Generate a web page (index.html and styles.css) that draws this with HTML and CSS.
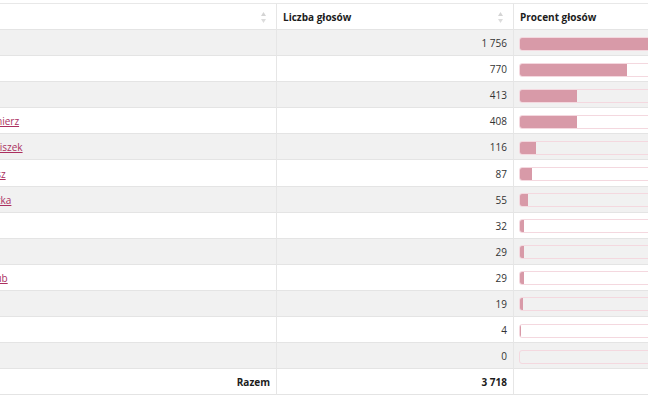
FILE: index.html
```html
<!DOCTYPE html>
<html lang="pl">
<head>
<meta charset="utf-8">
<title>Wyniki głosowania</title>
<link rel="stylesheet" href="styles.css">
</head>
<body>
<div class="viewport">
  <table class="results">
    <colgroup>
      <col class="c-name">
      <col class="c-votes">
      <col class="c-pct">
    </colgroup>
    <thead>
      <tr>
        <th><div class="th-in"><span>Imię</span><svg class="sort" width="5" height="11" viewBox="0 0 5 11"><path d="M2.5 0 L5 4 L0 4 Z" fill="#d4d4d4"/><path d="M0 7 L5 7 L2.5 11 Z" fill="#dcdcdc"/></svg></div></th>
        <th><div class="th-in"><span>Liczba głosów</span><svg class="sort" width="5" height="11" viewBox="0 0 5 11"><path d="M2.5 0 L5 4 L0 4 Z" fill="#d4d4d4"/><path d="M0 7 L5 7 L2.5 11 Z" fill="#dcdcdc"/></svg></div></th>
        <th><div class="th-in"><span>Procent głosów</span></div></th>
      </tr>
    </thead>
    <tbody>
      <tr><td><a href="#">Karol</a></td><td class="num">1 756</td><td><div class="bar"><div class="fill" style="width:100%"></div></div></td></tr>
      <tr><td><a href="#">Piotr</a></td><td class="num">770</td><td><div class="bar"><div class="fill" style="width:43.85%"></div></div></td></tr>
      <tr><td><a href="#">Jerzy</a></td><td class="num">413</td><td><div class="bar"><div class="fill" style="width:23.52%"></div></div></td></tr>
      <tr><td><a href="#">Kazimierz</a></td><td class="num">408</td><td><div class="bar"><div class="fill" style="width:23.23%"></div></div></td></tr>
      <tr><td><a href="#">Franciszek</a></td><td class="num">116</td><td><div class="bar"><div class="fill" style="width:6.61%"></div></div></td></tr>
      <tr><td><a href="#">Łukasz</a></td><td class="num">87</td><td><div class="bar"><div class="fill" style="width:4.95%"></div></div></td></tr>
      <tr><td><a href="#">Mieszka</a></td><td class="num">55</td><td><div class="bar"><div class="fill" style="width:3.13%"></div></div></td></tr>
      <tr><td><a href="#">Józef</a></td><td class="num">32</td><td><div class="bar"><div class="fill" style="width:1.82%"></div></div></td></tr>
      <tr><td><a href="#">Leon</a></td><td class="num">29</td><td><div class="bar"><div class="fill" style="width:1.65%"></div></div></td></tr>
      <tr><td><a href="#">J. Jakub</a></td><td class="num">29</td><td><div class="bar"><div class="fill" style="width:1.65%"></div></div></td></tr>
      <tr><td><a href="#">Igor</a></td><td class="num">19</td><td><div class="bar"><div class="fill" style="width:1.08%"></div></div></td></tr>
      <tr><td><a href="#">Jan</a></td><td class="num">4</td><td><div class="bar"><div class="fill" style="width:0.23%"></div></div></td></tr>
      <tr><td><a href="#">Wit</a></td><td class="num">0</td><td><div class="bar"><div class="fill" style="width:0%"></div></div></td></tr>
    </tbody>
    <tfoot>
      <tr><td class="num strong">Razem</td><td class="num strong">3 718</td><td></td></tr>
    </tfoot>
  </table>
</div>
</body>
</html>
```
FILE: styles.css
```css
* { box-sizing: border-box; }

html, body {
  margin: 0;
  padding: 0;
  background: #ffffff;
}

body {
  font-family: "Open Sans", "Liberation Sans", sans-serif;
  font-size: 10px;
  color: #333333;
}

.viewport {
  width: 648px;
  height: 400px;
  overflow: hidden;
  padding-top: 3px;
}

.results {
  border-collapse: separate;
  border-spacing: 0;
  table-layout: fixed;
  width: 803px;
  margin-left: -32px;
}

.c-name { width: 309px; }
.c-votes { width: 237px; }
.c-pct { width: 257px; }

.results th,
.results td {
  border-right: 1px solid #e6e6e6;
  border-bottom: 1px solid #e4e4e4;
  padding: 2px 6px 0;
  vertical-align: middle;
  line-height: 13px;
}

.results th:last-child,
.results td:last-child {
  border-right: none;
}

.results th {
  border-top: 1px solid #e8e8e8;
  height: 27px;
  text-align: left;
  font-weight: 700;
  color: #1c1c1c;
  background: #ffffff;
}

.th-in {
  display: flex;
  align-items: center;
  justify-content: space-between;
  padding-right: 4px;
}

.sort {
  display: block;
  flex: none;
}

.results td {
  height: 26.1px;
}

.results tbody tr:nth-child(odd) td {
  background: #f1f1f1;
}

.results tbody tr:nth-child(even) td {
  background: #ffffff;
}

.results tfoot td {
  background: #ffffff;
}

.num {
  text-align: right;
  color: #333333;
}

.strong {
  font-weight: 700;
  color: #1c1c1c;
}

.results a {
  color: #ab2f5f;
  text-decoration: underline;
}

.results td:last-child {
  padding-left: 5px;
}

.bar {
  height: 14px;
  border: 1px solid #f4d8df;
  border-radius: 3px;
  overflow: hidden;
}

.fill {
  height: 100%;
  background: #d89aa8;
}
```
